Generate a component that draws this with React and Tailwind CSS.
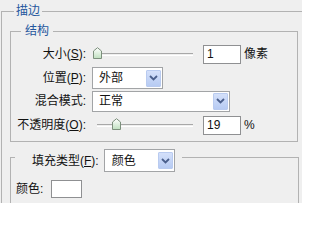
const FONT = { fontFamily: '"Liberation Sans", "Noto Sans CJK SC", sans-serif' };

const Key = ({ children }) => <span className="underline">{children}</span>;

function Chevron() {
  return (
    <svg width="9" height="6" viewBox="0 0 9 6">
      <path d="M1 1l3.5 3.5L8 1" fill="none" stroke="#4a5f8c" strokeWidth="1.8" />
    </svg>
  );
}

function Select({ value, className }) {
  return (
    <div className={`flex items-center bg-white border border-[#a2a4a6] pl-[6px] pr-[1px] ${className}`}>
      <span className="flex-1 leading-none">{value}</span>
      <div className="w-[15px] h-[17px] flex items-center justify-center bg-gradient-to-b from-[#d4e0fa] to-[#b7cbf3] border border-[#b9cbf0] rounded-[1px]">
        <Chevron />
      </div>
    </div>
  );
}

function Thumb() {
  return (
    <svg width="9" height="12" viewBox="0 0 9 12">
      <defs>
        <linearGradient id="thumbFill" x1="0" y1="0" x2="0" y2="1">
          <stop offset="0" stopColor="#ffffff" />
          <stop offset="1" stopColor="#bfe0bf" />
        </linearGradient>
      </defs>
      <path d="M0.5 4L4.5 0.7L8.5 4V11.5H0.5Z" fill="url(#thumbFill)" stroke="#7d907d" strokeWidth="1" />
    </svg>
  );
}

function Slider({ pct }) {
  return (
    <div className="relative w-[105px] h-[22px] flex items-center">
      <div className="ml-[5px] w-[96px] h-[3px] border-t border-[#a8a8a8] border-b border-b-white" />
      <div className="absolute top-[4px]" style={{ left: 1 + Math.round(pct * 100) }}>
        <Thumb />
      </div>
    </div>
  );
}

function Label({ children }) {
  return <div className="w-[75px] text-right mr-[6px] whitespace-nowrap">{children}</div>;
}

function NumBox({ value }) {
  return (
    <div className="ml-[6px] w-[38px] h-[19px] bg-white border border-[#8f9092] pl-[3px] flex items-center leading-none">
      {value}
    </div>
  );
}

export default function App() {
  return (
    <div className="w-[302px] h-[203px] overflow-hidden bg-[#efefef] text-[12px] text-[#111]" style={FONT}>
      {/* 描边 */}
      <fieldset className="ml-[1px] mt-[3px] w-[330px] h-[260px] border border-[#b2b2b2]">
        <legend className="ml-[12px] px-[2px] leading-[16px] text-[#24569d]">描边</legend>

        {/* 结构 */}
        <fieldset className="ml-[8px] mt-[4px] w-[288px] border border-[#b2b2b2] pt-[4px] pb-[5px]">
          <legend className="ml-[10px] px-[4px] leading-[16px] text-[#24569d]">结构</legend>

          <div className="flex items-center h-[22px]">
            <Label>大小(<Key>S</Key>):</Label>
            <Slider pct={1 / 250} />
            <NumBox value="1" />
            <span className="ml-[3px]">像素</span>
          </div>

          <div className="flex items-center h-[22px] mt-[2px]">
            <Label>位置(<Key>P</Key>):</Label>
            <Select value="外部" className="w-[71px] h-[22px]" />
          </div>

          <div className="flex items-center h-[22px] mt-[1px]">
            <Label>混合模式:</Label>
            <Select value="正常" className="w-[138px] h-[21px]" />
          </div>

          <div className="flex items-center h-[22px] mt-[2px]">
            <Label>不透明度(<Key>O</Key>):</Label>
            <Slider pct={0.19} />
            <NumBox value="19" />
            <span className="ml-[3px]">%</span>
          </div>
        </fieldset>

        {/* 填充类型 */}
        <fieldset className="ml-[8px] w-[289px] h-[120px] border border-[#b2b2b2]">
          <legend className="ml-[4px] pt-[7px] pl-[17px] pr-[7px]">
            <div className="flex items-center">
              <span className="mr-[5px] whitespace-nowrap">填充类型(<Key>F</Key>):</span>
              <Select value="颜色" className="w-[71px] h-[23px] pl-[7px]" />
            </div>
          </legend>
          <div className="flex items-center pl-[5px] pt-[8px]">
            <span className="w-[35px] whitespace-nowrap">颜色:</span>
            <div className="w-[31px] h-[18px] bg-white border border-[#8f9092]" />
          </div>
        </fieldset>
      </fieldset>
    </div>
  );
}
